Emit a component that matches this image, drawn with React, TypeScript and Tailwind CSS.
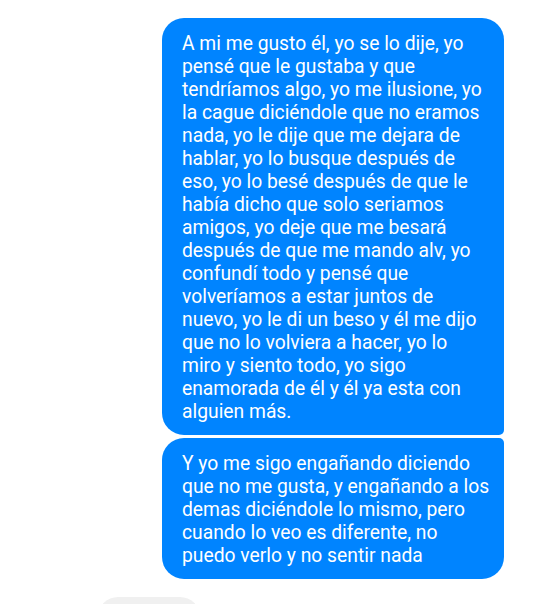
const first = [
  "A mi me gusto él, yo se lo dije, yo",
  "pensé que le gustaba y que",
  "tendríamos algo, yo me ilusione, yo",
  "la cague diciéndole que no eramos",
  "nada, yo le dije que me dejara de",
  "hablar, yo lo busque después de",
  "eso, yo lo besé después de que le",
  "había dicho que solo seriamos",
  "amigos, yo deje que me besará",
  "después de que me mando alv, yo",
  "confundí todo y pensé que",
  "volveríamos a estar juntos de",
  "nuevo, yo le di un beso y él me dijo",
  "que no lo volviera a hacer, yo lo",
  "miro y siento todo, yo sigo",
  "enamorada de él y él ya esta con",
  "alguien más.",
];

const second = [
  "Y yo me sigo engañando diciendo",
  "que no me gusta, y engañando a los",
  "demas diciéndole lo mismo, pero",
  "cuando lo veo es diferente, no",
  "puedo verlo y no sentir nada",
];

function Bubble({ lines, corner }: { lines: string[]; corner: string }) {
  return (
    <div
      className={`w-[342px] rounded-[22px] ${corner} bg-[#0084ff] pl-[20px] pr-[12px] pt-[14px] pb-[12px] text-[19.3px] leading-[23px] text-white`}
    >
      {lines.map((l, i) => (
        <span key={i} className="block whitespace-nowrap">
          {l}
        </span>
      ))}
    </div>
  );
}

export default function App() {
  return (
    <div className="h-[604px] w-[540px] overflow-hidden bg-white pt-[18px] font-['Roboto',sans-serif]">
      <div className="flex flex-col items-end gap-[3px] pr-[36px]">
        <Bubble lines={first} corner="rounded-br-[5px]" />
        <Bubble lines={second} corner="rounded-tr-[5px]" />
      </div>
      <div className="ml-[98px] mt-[18px] h-[7px] overflow-hidden">
        <div className="h-[40px] w-[102px] rounded-[20px] bg-[#f0f0f0]" />
      </div>
    </div>
  );
}
